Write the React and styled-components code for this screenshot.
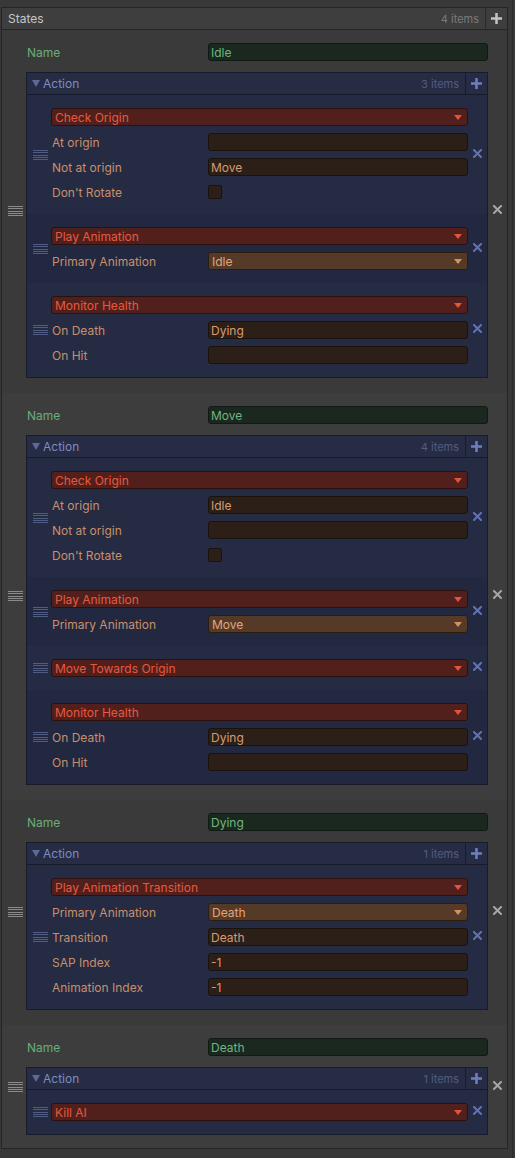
import React from 'react';
import styled, { createGlobalStyle } from 'styled-components';

const GlobalStyle = createGlobalStyle`
  html, body { margin: 0; padding: 0; background: #383838; }
  body { font-family: Inter, "Noto Sans", sans-serif; font-size: 12px; }
  #root { min-height: 1158px; }
`;

const Root = styled.div`
  display: flex;
  align-items: stretch;
  padding-left: 1px;
  min-height: 1158px;
  box-sizing: border-box;
`;

const Panel = styled.section`
  width: 507px;
  box-sizing: border-box;
  margin-top: 7px;
  align-self: flex-start;
  border: 1px solid #252525;
  background: #3a3a3a;
`;

const Gutter = styled.div`
  width: 4px;
  border-right: 1px solid #2b2b2b;
`;

const PanelHeader = styled.header`
  display: flex;
  align-items: center;
  height: 21px;
  background: #3e3e3e;
  border-bottom: 1px solid #252525;
`;

const HeaderTitle = styled.div`
  flex: 1;
  padding-left: 6px;
  color: #c6c6c6;
  font-size: 12px;
`;

const Count = styled.div`
  font-size: 11px;
  padding-right: 6px;
  color: ${p => p.$color};
`;

const AddButton = styled.div`
  width: 21px;
  height: 100%;
  display: flex;
  align-items: center;
  justify-content: center;
  border-left: 1px solid ${p => p.$line};
`;

const StateItem = styled.div`
  display: grid;
  grid-template-columns: 24px 462px 19px;
  padding: 13px 0 ${p => (p.$last ? 13 : 15)}px;
  background: ${p => (p.$alt ? '#3d3d3d' : '#3a3a3a')};
`;

const HandleCell = styled.div`
  display: flex;
  align-items: center;
  justify-content: flex-end;
  padding-right: 3px;
`;

const RemoveCell = styled.div`
  display: flex;
  align-items: center;
  justify-content: center;
  padding-bottom: 3px;
`;

const StateContent = styled.div`
  display: flex;
  flex-direction: column;
  gap: 11px;
`;

const NameRow = styled.div`
  display: grid;
  grid-template-columns: 182px 280px;
  align-items: center;
  height: 18px;
`;

const NameLabel = styled.span`
  padding-left: 1px;
  color: #6aae79;
`;

const NameBox = styled.div`
  height: 18px;
  box-sizing: border-box;
  border: 1px solid #101a12;
  border-radius: 3px;
  background: #1b281f;
  color: #6fb680;
  padding-left: 2px;
  display: flex;
  align-items: center;
`;

const ActionList = styled.div`
  border: 1px solid #171b2b;
`;

const ActionHeader = styled.div`
  display: flex;
  align-items: center;
  height: 21px;
  background: #262c43;
  border-bottom: 1px solid #171b2b;
`;

const ActionTitle = styled.div`
  flex: 1;
  display: flex;
  align-items: center;
  gap: 3px;
  padding-left: 5px;
  color: #7d8ac3;
`;

const ActionItem = styled.div`
  display: grid;
  grid-template-columns: 24px 417px 19px;
  padding: 13px 0;
  background: ${p => (p.$alt ? '#222840' : '#252b42')};
`;

const ItemContent = styled.div`
  display: flex;
  flex-direction: column;
  gap: 7px;
`;

const FieldRow = styled.div`
  display: grid;
  grid-template-columns: 157px 260px;
  align-items: center;
  height: 18px;
`;

const FieldLabel = styled.span`
  padding-left: 1px;
  color: #c98f6b;
`;

const Dropdown = styled.div`
  height: 18px;
  box-sizing: border-box;
  display: flex;
  align-items: center;
  justify-content: space-between;
  padding: 0 5px 0 3px;
  border-radius: 3px;
  border: 1px solid ${p => (p.$variant === 'brown' ? '#2c1d13' : '#2c100e')};
  background: ${p => (p.$variant === 'brown' ? '#553a28' : '#52201c')};
  color: ${p => (p.$variant === 'brown' ? '#e2a679' : '#e8583f')};
`;

const TextBox = styled.div`
  height: 18px;
  box-sizing: border-box;
  display: flex;
  align-items: center;
  padding-left: 2px;
  border-radius: 3px;
  border: 1px solid #1a120d;
  background: #2b1f18;
  color: #d99b70;
`;

const CheckBox = styled.div`
  width: 14px;
  height: 14px;
  box-sizing: border-box;
  border-radius: 2px;
  border: 1px solid #1a120d;
  background: #2b1f18;
`;

const Handle = ({ color }) => (
  <svg width="15" height="10" viewBox="0 0 15 10">
    {[0, 2, 5, 7, 9].map(y => (
      <rect key={y} x="0" y={y} width="15" height="1" fill={color} />
    ))}
  </svg>
);

const Cross = ({ color }) => (
  <svg width="9" height="9" viewBox="0 0 9 9">
    <path d="M1 1 L8 8 M8 1 L1 8" stroke={color} strokeWidth="2" strokeLinecap="square" />
  </svg>
);

const Plus = ({ color }) => (
  <svg width="11" height="11" viewBox="0 0 11 11">
    <rect x="4.25" y="0" width="2.5" height="11" fill={color} />
    <rect x="0" y="4.25" width="11" height="2.5" fill={color} />
  </svg>
);

const Caret = ({ color, w = 8, h = 5 }) => (
  <svg width={w} height={h} viewBox={`0 0 ${w} ${h}`}>
    <path d={`M0 0 L${w} 0 L${w / 2} ${h} Z`} fill={color} />
  </svg>
);

const states = [
  {
    name: 'Idle',
    actions: [
      {
        type: 'Check Origin',
        fields: [
          { label: 'At origin', kind: 'text', value: '' },
          { label: 'Not at origin', kind: 'text', value: 'Move' },
          { label: "Don't Rotate", kind: 'check' },
        ],
      },
      { type: 'Play Animation', fields: [{ label: 'Primary Animation', kind: 'select', value: 'Idle' }] },
      {
        type: 'Monitor Health',
        fields: [
          { label: 'On Death', kind: 'text', value: 'Dying' },
          { label: 'On Hit', kind: 'text', value: '' },
        ],
      },
    ],
  },
  {
    name: 'Move',
    actions: [
      {
        type: 'Check Origin',
        fields: [
          { label: 'At origin', kind: 'text', value: 'Idle' },
          { label: 'Not at origin', kind: 'text', value: '' },
          { label: "Don't Rotate", kind: 'check' },
        ],
      },
      { type: 'Play Animation', fields: [{ label: 'Primary Animation', kind: 'select', value: 'Move' }] },
      { type: 'Move Towards Origin', fields: [] },
      {
        type: 'Monitor Health',
        fields: [
          { label: 'On Death', kind: 'text', value: 'Dying' },
          { label: 'On Hit', kind: 'text', value: '' },
        ],
      },
    ],
  },
  {
    name: 'Dying',
    actions: [
      {
        type: 'Play Animation Transition',
        fields: [
          { label: 'Primary Animation', kind: 'select', value: 'Death' },
          { label: 'Transition', kind: 'text', value: 'Death' },
          { label: 'SAP Index', kind: 'text', value: '-1' },
          { label: 'Animation Index', kind: 'text', value: '-1' },
        ],
      },
    ],
  },
  {
    name: 'Death',
    actions: [{ type: 'Kill AI', fields: [] }],
  },
];

const Field = ({ field }) => (
  <FieldRow>
    <FieldLabel>{field.label}</FieldLabel>
    {field.kind === 'check' ? (
      <CheckBox />
    ) : field.kind === 'select' ? (
      <Dropdown $variant="brown">
        <span>{field.value}</span>
        <Caret color="#d4925f" />
      </Dropdown>
    ) : (
      <TextBox>{field.value}</TextBox>
    )}
  </FieldRow>
);

const Action = ({ action, alt }) => (
  <ActionItem $alt={alt}>
    <HandleCell>
      <Handle color="#505b86" />
    </HandleCell>
    <ItemContent>
      <Dropdown $variant="red">
        <span>{action.type}</span>
        <Caret color="#e2553c" />
      </Dropdown>
      {action.fields.map((f, i) => (
        <Field key={i} field={f} />
      ))}
    </ItemContent>
    <RemoveCell>
      <Cross color="#6373b2" />
    </RemoveCell>
  </ActionItem>
);

export default function App() {
  return (
    <>
      <GlobalStyle />
      <Root>
        <Panel>
          <PanelHeader>
            <HeaderTitle>States</HeaderTitle>
            <Count $color="#7b7b7b">{states.length} items</Count>
            <AddButton $line="#2a2a2a">
              <Plus color="#c4c4c4" />
            </AddButton>
          </PanelHeader>
          {states.map((s, si) => (
            <StateItem key={si} $alt={si % 2 === 1} $last={si === states.length - 1}>
              <HandleCell>
                <Handle color="#8a8a8a" />
              </HandleCell>
              <StateContent>
                <NameRow>
                  <NameLabel>Name</NameLabel>
                  <NameBox>{s.name}</NameBox>
                </NameRow>
                <ActionList>
                  <ActionHeader>
                    <ActionTitle>
                      <Caret color="#5c699b" w={8} h={7} />
                      <span>Action</span>
                    </ActionTitle>
                    <Count $color="#535c82">{s.actions.length} items</Count>
                    <AddButton $line="#171b2b">
                      <Plus color="#6f7fc0" />
                    </AddButton>
                  </ActionHeader>
                  {s.actions.map((a, ai) => (
                    <Action key={ai} action={a} alt={ai % 2 === 1} />
                  ))}
                </ActionList>
              </StateContent>
              <RemoveCell>
                <Cross color="#a6a6a6" />
              </RemoveCell>
            </StateItem>
          ))}
        </Panel>
        <Gutter />
      </Root>
    </>
  );
}
